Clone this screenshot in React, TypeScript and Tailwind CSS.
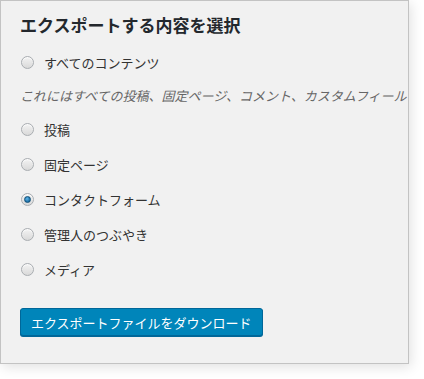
import React from "react";

const options = [
  { label: "投稿", checked: false },
  { label: "固定ページ", checked: false },
  { label: "コンタクトフォーム", checked: true },
  { label: "管理人のつぶやき", checked: false },
  { label: "メディア", checked: false },
];

function Radio({ checked }: { checked?: boolean }) {
  return (
    <span className="flex h-[13px] w-[13px] shrink-0 items-center justify-center rounded-full border border-[#a9adb1] bg-[linear-gradient(180deg,#f3f3f3,#d9d9d9)] shadow-[inset_0_1px_1px_rgba(255,255,255,0.8)]">
      {checked && (
        <span className="h-[7px] w-[7px] rounded-full border border-[#0f4f78] bg-[radial-gradient(circle_at_40%_35%,#5fb6ea,#1c6ea4_70%)]" />
      )}
    </span>
  );
}

function Row({ label, checked }: { label: string; checked?: boolean }) {
  return (
    <label className="flex h-[35px] items-center">
      <span className="flex w-[24px] justify-start pl-[1px]">
        <Radio checked={checked} />
      </span>
      <span className="text-[13px] leading-none text-[#333]">{label}</span>
    </label>
  );
}

export default function App() {
  return (
    <div className="h-[379px] w-[424px] bg-white font-['Noto_Sans_CJK_JP','Liberation_Sans',sans-serif]">
      <div className="h-[364px] w-[409px] overflow-hidden border border-[#c3c3c3] bg-[#f1f1f1] pl-[19px] shadow-[2px_3px_12px_rgba(0,0,0,0.12)]">
        <h2 className="pt-[13px] text-[17px] font-bold leading-[22px] text-[#23282d]">エクスポートする内容を選択</h2>

        <div className="mt-[9px]">
          <Row label="すべてのコンテンツ" />
        </div>
        <p className="mt-[1px] flex h-[28px] items-center whitespace-nowrap text-[13px] italic leading-none text-[#666]">
          これにはすべての投稿、固定ページ、コメント、カスタムフィールド、ターム、ナビゲーションメニュー、カスタム投稿が含まれます。
        </p>
        <div className="mt-[3px]">
          {options.map((o) => (
            <Row key={o.label} label={o.label} checked={o.checked} />
          ))}
        </div>

        <button className="mt-[21px] h-[28px] rounded-[3px] border border-[#006799] bg-[#0085ba] px-[10px] text-[13px] leading-none text-white shadow-[0_1px_0_#006799]">
          エクスポートファイルをダウンロード
        </button>
      </div>
    </div>
  );
}
